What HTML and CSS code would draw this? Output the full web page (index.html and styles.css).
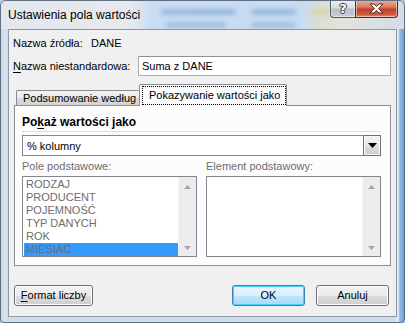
FILE: index.html
```html
<!DOCTYPE html>
<html lang="pl">
<head>
<meta charset="utf-8">
<title>Ustawienia pola wartości</title>
<link rel="stylesheet" href="styles.css">
</head>
<body>
<div class="window">
  <div class="titlebar">
    <div class="glass">
      <span class="blob b1"></span><span class="blob b2"></span><span class="blob b3"></span><span class="blob b4"></span><span class="blob b5"></span>
    </div>
    <span class="title">Ustawienia pola wartości</span>
    <div class="caption-btns">
      <div class="cap help"><span class="q">?</span></div>
      <div class="cap close">
        <svg width="15" height="11" viewBox="0 0 15 11"><path d="M1 1h4l2.5 2.6L10 1h4l-4.5 4.5L14 10h-4L7.5 7.4 5 10H1l4.5-4.5z" fill="#fff" stroke="#5a2a24" stroke-width="1" stroke-linejoin="round"/></svg>
      </div>
    </div>
  </div>
  <div class="client">
    <div class="src"><span class="src-lbl">Nazwa źródła:</span><span>DANE</span></div>
    <div class="custom">
      <span class="lbl"><u>N</u>azwa niestandardowa:</span>
      <div class="textbox">Suma z DANE</div>
    </div>
    <div class="tabs">
      <div class="tab">Podsumowanie według</div>
      <div class="tab active"><span class="focus">Pokazywanie wartości jako</span></div>
    </div>
    <div class="panel">
      <div class="group-title">Po<u>k</u>aż wartości jako</div>
      <div class="combo">
        <span class="combo-text">% kolumny</span>
        <div class="dd"><svg width="9" height="5" viewBox="0 0 9 5"><path d="M0 0h9L4.5 5z" fill="#000"/></svg></div>
      </div>
      <div class="lists">
        <div class="col">
          <div class="list-lbl">Pole podstawowe:</div>
          <div class="listbox">
            <div class="items">
              <div class="item">RODZAJ</div>
              <div class="item">PRODUCENT</div>
              <div class="item">POJEMNOŚĆ</div>
              <div class="item">TYP DANYCH</div>
              <div class="item">ROK</div>
              <div class="item sel">MIESIAC</div>
            </div>
            <div class="scroll">
              <svg width="7" height="4" viewBox="0 0 7 4"><path d="M0 4h7L3.5 0z" fill="#a7a7a7"/></svg>
              <svg width="7" height="4" viewBox="0 0 7 4"><path d="M0 0h7L3.5 4z" fill="#a7a7a7"/></svg>
            </div>
          </div>
        </div>
        <div class="col">
          <div class="list-lbl">Element podstawowy:</div>
          <div class="listbox">
            <div class="items"></div>
            <div class="scroll">
              <svg width="7" height="4" viewBox="0 0 7 4"><path d="M0 4h7L3.5 0z" fill="#a7a7a7"/></svg>
              <svg width="7" height="4" viewBox="0 0 7 4"><path d="M0 0h7L3.5 4z" fill="#a7a7a7"/></svg>
            </div>
          </div>
        </div>
      </div>
    </div>
    <div class="buttons">
      <div class="btn fmt"><u>F</u>ormat liczby</div>
      <div class="spacer"></div>
      <div class="btn ok">OK</div>
      <div class="btn">Anuluj</div>
    </div>
  </div>
</div>
</body>
</html>
```
FILE: styles.css
```css
* { box-sizing: border-box; }
html, body { margin: 0; padding: 0; }
body {
  width: 405px;
  height: 323px;
  overflow: hidden;
  background: #b9cde2;
  font-family: "Liberation Sans", Arial, sans-serif;
  font-size: 11px;
  color: #000;
}
.window {
  width: 405px;
  height: 323px;
  border: 1px solid #5f6f82;
  border-radius: 6px 6px 4px 4px;
  background: linear-gradient(90deg, #c9d6e4 0, #d8e1ea 3px, #cfdbe8 8px, #cfdbe8 392px, #e4ecf4 397px, #8db8e2 399px, #7aaad8 402px, #5f6f82 404px);
  display: flex;
  flex-direction: column;
  overflow: hidden;
  position: relative;
}
.titlebar {
  height: 28px;
  position: relative;
  flex: none;
  background: linear-gradient(90deg, #e3e8ee 0, #e6eaee 130px, #c9ddf2 150px, #c6dcf3 300px, #dcdfd2 320px, #e2e4dc 340px, #d4dce6 400px);
}
.glass { position: absolute; inset: 0; overflow: hidden; }
.blob {
  position: absolute;
  height: 6px;
  border-radius: 3px;
  background: #8fb0d8;
  filter: blur(2px);
  opacity: 0.8;
}
.b1 { left: 160px; top: 8px; width: 75px; }
.b2 { left: 250px; top: 8px; width: 45px; }
.b3 { left: 165px; top: 21px; width: 60px; background: #9cb9dc; }
.b4 { left: 250px; top: 21px; width: 45px; background: #9cb9dc; }
.b5 { left: 310px; top: 8px; width: 20px; background: #d9d3a8; }
.title {
  position: relative;
  display: block;
  padding-left: 7px;
  line-height: 28px;
  font-size: 12px;
  color: #000;
}
.caption-btns {
  position: absolute;
  top: -1px;
  right: 6px;
  display: flex;
}
.cap {
  height: 18px;
  border: 1px solid #4e5866;
  border-top: none;
  display: flex;
  align-items: center;
  justify-content: center;
  box-shadow: inset 0 0 0 1px rgba(255,255,255,0.45);
}
.help {
  width: 25px;
  border-radius: 0 0 0 4px;
  border-right: none;
  background: linear-gradient(180deg, #eef0f2 0, #d9dde2 45%, #b9c0c9 55%, #c9d0d8 100%);
}
.q {
  font-family: "DejaVu Sans", sans-serif;
  font-weight: bold;
  font-size: 13px;
  color: #fff;
  text-shadow: 1px 0 #333b46, -1px 0 #333b46, 0 1px #333b46, 0 -1px #333b46;
  line-height: 13px;
}
.close {
  width: 43px;
  border-radius: 0 0 4px 0;
  background: linear-gradient(180deg, #eab0a0 0, #dc7c64 40%, #c2402a 55%, #cf5a3e 85%, #e08a6a 100%);
  border-color: #5a2a24;
}
.client {
  margin: 0 7px;
  height: 288px;
  border: 1px solid #8b98a8;
  background: #f0f0f0;
  flex: none;
}
.src {
  margin-top: 6px;
  height: 15px;
  line-height: 15px;
  padding-left: 4px;
  display: flex;
}
.src-lbl { width: 78px; }
.custom {
  margin-top: 5px;
  height: 20px;
  padding: 0 5px 0 4px;
  display: flex;
  align-items: center;
}
.custom .lbl { flex: 1; white-space: nowrap; }
.textbox {
  flex: none;
  width: 253px;
  height: 20px;
  border: 1px solid #abadb3;
  border-top-color: #8e9196;
  background: #fff;
  line-height: 18px;
  padding-left: 3px;
}
.tabs {
  margin-top: 8px;
  height: 21px;
  padding-left: 7px;
  display: flex;
  align-items: flex-end;
  position: relative;
  z-index: 2;
}
.tab {
  height: 15px;
  width: 123px;
  border: 1px solid #898c95;
  border-bottom: none;
  border-right: none;
  border-radius: 2px 2px 0 0;
  background: linear-gradient(180deg, #f3f3f3 0, #e9e9e9 50%, #dbdbdb 51%, #d4d4d4 100%);
  line-height: 14px;
  padding-left: 6px;
  white-space: nowrap;
}
.tab.active {
  height: 22px;
  width: 148px;
  margin-bottom: -1px;
  border-right: 1px solid #898c95;
  background: #fcfcfc;
  padding: 2px 0 0 3px;
  line-height: 14px;
}
.focus {
  display: inline-block;
  outline: 1px dotted #000;
  outline-offset: 0;
  padding: 1px 5px 2px 6px;
  line-height: 14px;
}
.panel {
  margin: 0 5px;
  height: 161px;
  border: 1px solid #898c95;
  background: #fcfcfc;
  padding: 0 9px 0 7px;
  position: relative;
  z-index: 1;
}
.group-title {
  margin-top: 9px;
  height: 17px;
  line-height: 15px;
  font-size: 12px;
  font-weight: bold;
  border-bottom: 1px solid #d5dfe5;
}
.combo {
  margin-top: 3px;
  height: 21px;
  border: 1px solid #828790;
  background: #fff;
  display: flex;
  align-items: center;
}
.combo-text { flex: 1; padding-left: 4px; }
.dd {
  width: 18px;
  height: 21px;
  margin: -1px -1px -1px 0;
  border: 1px solid #707070;
  background: linear-gradient(180deg, #f2f2f2 0, #ebebeb 45%, #dddddd 55%, #cfcfcf 100%);
  display: flex;
  align-items: center;
  justify-content: center;
  box-shadow: inset 0 0 0 1px #fafafa;
}
.lists {
  margin-top: 3px;
  display: grid;
  grid-template-columns: 175px 1fr;
  column-gap: 9px;
}
.list-lbl {
  height: 17px;
  line-height: 15px;
  color: #6d6d6d;
}
.listbox {
  height: 81px;
  border: 1px solid #828790;
  background: #fff;
  display: flex;
}
.items { flex: 1; padding-top: 1px; padding-left: 1px; }
.item {
  height: 13px;
  line-height: 13px;
  padding-left: 2px;
  color: #6d6d6d;
  white-space: nowrap;
}
.item.sel { background: #3399ff; color: #6d6d6d; }
.scroll {
  width: 18px;
  background: #ececec;
  border-left: 1px solid #f4f4f4;
  display: flex;
  flex-direction: column;
  justify-content: space-between;
  align-items: center;
  padding: 8px 0 6px;
}
.buttons {
  margin-top: 19px;
  height: 21px;
  padding: 0 7px 0 5px;
  display: flex;
  gap: 11px;
}
.spacer { flex: 1; }
.btn {
  width: 73px;
  height: 21px;
  border: 1px solid #707070;
  border-radius: 3px;
  background: linear-gradient(180deg, #f2f2f2 0, #ebebeb 50%, #dddddd 51%, #cfcfcf 100%);
  box-shadow: inset 0 0 0 1px #fcfcfc;
  text-align: center;
  line-height: 19px;
}
.btn.fmt { width: 79px; }
.btn.ok {
  border-color: #3c7fb1;
  box-shadow: inset 0 0 0 1px #48d1f9;
  background: linear-gradient(180deg, #eaf6fd 0, #d9f0fc 50%, #bee6fd 51%, #a7d9f5 100%);
}
u { text-decoration: underline; text-underline-offset: 2px; }
```
